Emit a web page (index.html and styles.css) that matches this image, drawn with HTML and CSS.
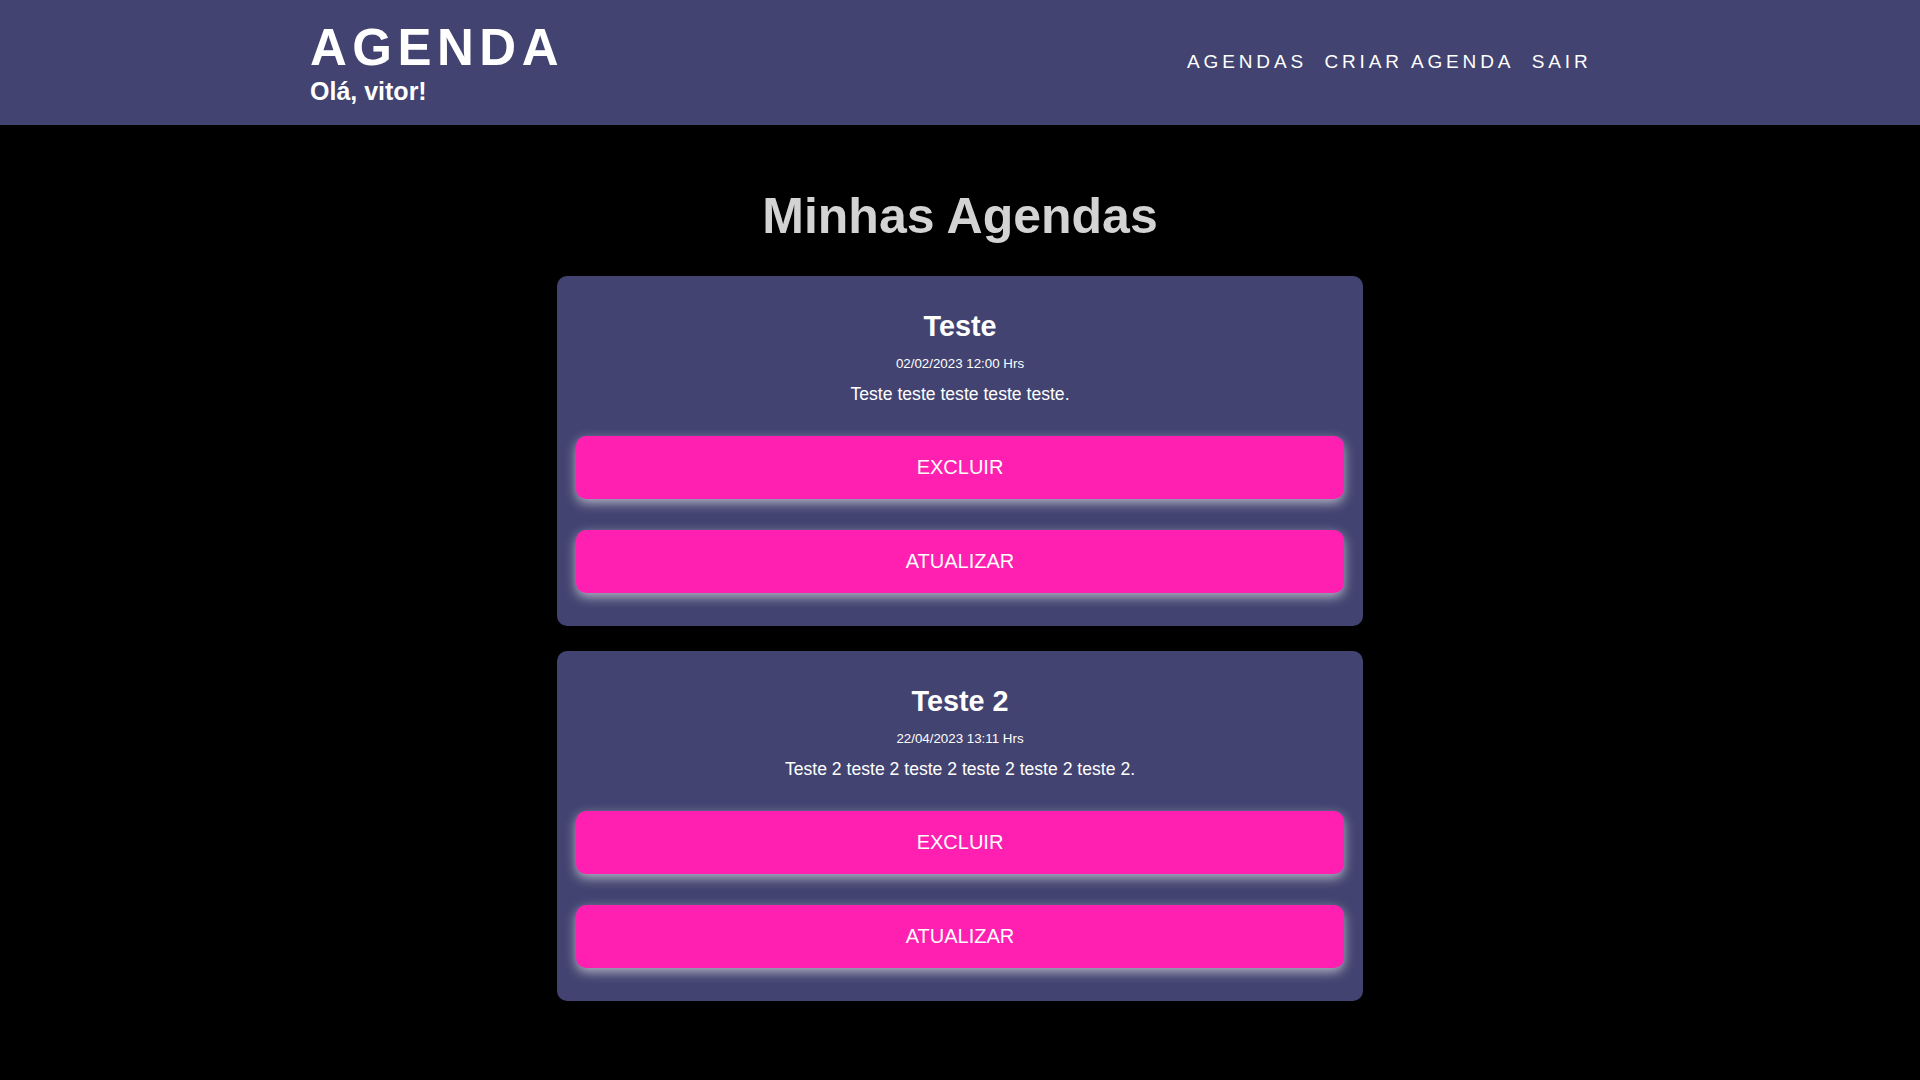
FILE: index.html
```html
<!DOCTYPE html>
<html lang="pt-BR">
<head>
<meta charset="utf-8">
<title>Agenda</title>
<link rel="stylesheet" href="styles.css">
</head>
<body>
<header class="topbar">
  <div class="topbar-inner">
    <div class="brand">
      <h1 class="brand-title">AGENDA</h1>
      <p class="brand-greet">Olá, vitor!</p>
    </div>
    <nav class="nav">
      <a class="nav-link" href="#">AGENDAS</a>
      <a class="nav-link" href="#">CRIAR AGENDA</a>
      <a class="nav-link" href="#">SAIR</a>
    </nav>
  </div>
</header>
<main class="main">
  <h2 class="page-title">Minhas Agendas</h2>
  <section class="card">
    <h3 class="card-title">Teste</h3>
    <small class="card-date">02/02/2023 12:00 Hrs</small>
    <p class="card-desc">Teste teste teste teste teste.</p>
    <button class="btn">EXCLUIR</button>
    <button class="btn">ATUALIZAR</button>
  </section>
  <section class="card">
    <h3 class="card-title">Teste 2</h3>
    <small class="card-date">22/04/2023 13:11 Hrs</small>
    <p class="card-desc">Teste 2 teste 2 teste 2 teste 2 teste 2 teste 2.</p>
    <button class="btn">EXCLUIR</button>
    <button class="btn">ATUALIZAR</button>
  </section>
</main>
</body>
</html>
```
FILE: styles.css
```css
* { box-sizing: border-box; }
html, body {
  margin: 0;
  padding: 0;
  background: #000;
  font-family: "Liberation Sans", Arial, sans-serif;
  color: #fff;
}
.topbar {
  background: #424370;
  height: 125px;
}
.topbar-inner {
  width: 1300px;
  height: 125px;
  margin: 0 auto;
  display: flex;
  justify-content: space-between;
  align-items: center;
  padding-right: 18.5px;
}
.brand {
  align-self: flex-start;
  padding-top: 19px;
}
.brand-title {
  margin: 0;
  font-size: 51px;
  line-height: 58px;
  font-weight: 700;
  letter-spacing: 5.5px;
}
.brand-greet {
  margin: 0;
  font-size: 25px;
  line-height: 28px;
  font-weight: 700;
}
.nav {
  display: flex;
  align-items: center;
  margin-top: -2px;
}
.nav-link {
  color: #fff;
  text-decoration: none;
  font-size: 19px;
  letter-spacing: 3.85px;
  margin-left: 17.5px;
}
.main {
  display: flex;
  flex-direction: column;
  align-items: center;
  padding: 62.5px 0 40px;
}
.page-title {
  margin: 0 0 31.5px;
  font-size: 50px;
  line-height: 57px;
  font-weight: 700;
  color: #d3d3d3;
}
.card {
  width: 806px;
  background: #424370;
  border-radius: 10px;
  padding: 34px 19px 33px;
  margin-bottom: 25px;
  display: flex;
  flex-direction: column;
  align-items: center;
}
.card-title {
  margin: 0 0 13px;
  font-size: 28.8px;
  line-height: 33px;
  font-weight: 700;
}
.card-date {
  display: block;
  font-size: 13.33px;
  line-height: 15px;
  margin-bottom: 13px;
}
.card-desc {
  margin: 0 0 32px;
  font-size: 17.6px;
  line-height: 20px;
}
.btn {
  width: 100%;
  height: 63px;
  border: none;
  border-radius: 10px;
  background: #ff1fb0;
  color: #fff;
  font-family: "Liberation Sans", Arial, sans-serif;
  font-size: 20px;
  box-shadow: 0 4px 12px rgba(255, 255, 255, 0.6);
  cursor: pointer;
}
.btn + .btn {
  margin-top: 31px;
}
```
